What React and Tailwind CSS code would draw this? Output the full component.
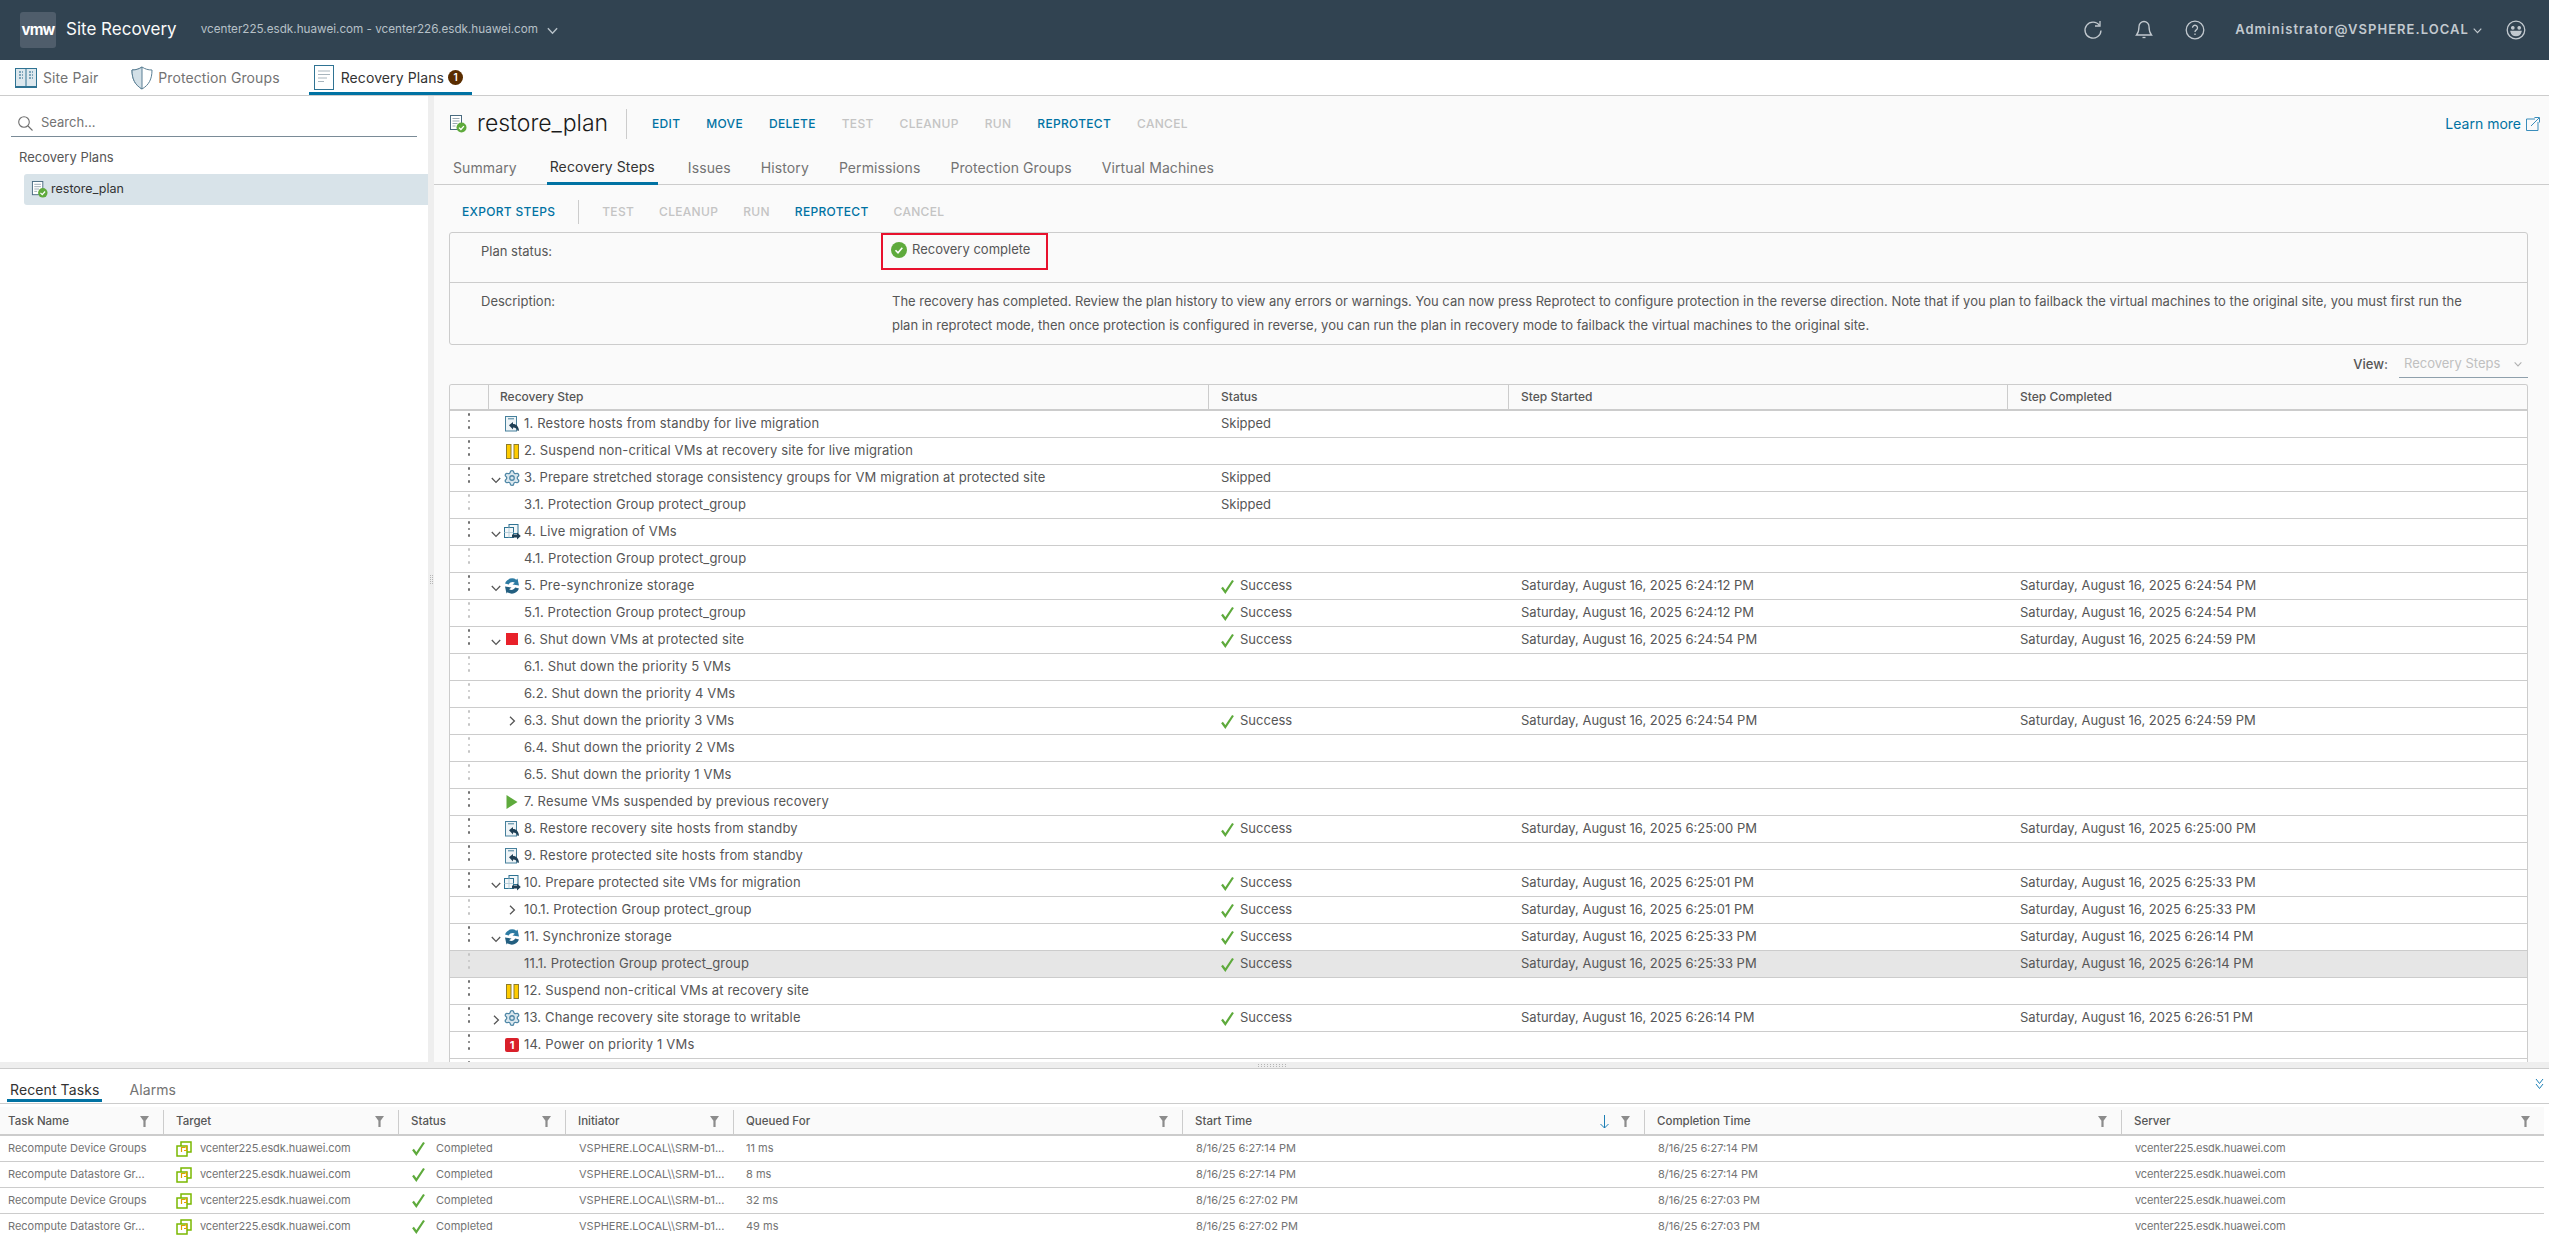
import React from "react";
import { Settings } from "lucide-react";

const Chev = ({ d = "down", c = "#565656", s = 10, className = "" }) => (
  <svg width={s} height={s} viewBox="0 0 10 10" fill="none" stroke={c} strokeWidth="1.3" className={`shrink-0 ${className}`}>
    {d === "down" ? <path d="M0.8 3l4.2 4.4L9.2 3" /> : <path d="M3 0.8l4.4 4.2L3 9.2" />}
  </svg>
);

const PlanIcon = ({ s = 18 }) => (
  <svg width={s} height={s} viewBox="0 0 18 18" className="shrink-0">
    <rect x="1.5" y="0.5" width="11" height="14" fill="#fff" stroke="#4a6b80" />
    <path d="M3.5 3.5h7M3.5 6h7M3.5 8.5h5M3.5 11h3" stroke="#9aa9b3" strokeWidth="1" />
    <circle cx="12.5" cy="12.5" r="5" fill="#5eaa3c" />
    <path d="M10 12.6l1.9 1.9 3-3.4" stroke="#fff" strokeWidth="1.3" fill="none" />
  </svg>
);

const HostIcon = () => (
  <svg width="15" height="16" viewBox="0 0 15 16" className="shrink-0">
    <rect x="0.5" y="0.5" width="11" height="14.5" fill="#eef4f7" stroke="#47809c" />
    <path d="M3 2.800h6" stroke="#47809c" />
    <path d="M4 9.300l4-3.300v2c3.500 0 5.500 2.500 6 6.500l-1.300.5c-.5-2-2-3.500-4.700-3.500v2z" fill="#1f3f55" />
  </svg>
);
const PauseIcon = () => (
  <svg width="13" height="15" viewBox="0 0 13 15" className="shrink-0">
    <rect x="0.500" y="0.500" width="4.500" height="14" fill="#ffcc00" stroke="#8f7d2b" />
    <rect x="8" y="0.500" width="4.500" height="14" fill="#ffcc00" stroke="#8f7d2b" />
  </svg>
);
const GearIcon = () => <Settings size={18} strokeWidth={1.7} color="#4f87a6" fill="#dbe8ef" className="shrink-0" />;
const MigrateIcon = () => (
  <svg width="17" height="16" viewBox="0 0 17 16" className="shrink-0">
    <rect x="5" y="0.500" width="9" height="9" fill="#f3f7f9" stroke="#2f7393" />
    <rect x="0.500" y="3.500" width="9" height="10" fill="#f3f7f9" stroke="#2f7393" />
    <path d="M5 3.500v10M0.500 8.500h9" stroke="#b7cfdb" strokeWidth="1" />
    <path d="M8 10.500h5V8.500l3.800 3.500L13 15.500v-2H8z" fill="#1f3f55" />
  </svg>
);
const SyncIcon = () => (
  <svg width="16" height="16" viewBox="0 0 16 16" className="shrink-0">
    <path d="M13.500 0.500L15 7.500 8.500 6.500 10.800 4.700C9 3.500 6 4 4.800 6.500L1 5.500C2.800 0.500 8.500-1 12.300 1.700z" fill="#2d7ba3" />
    <path d="M2.500 15.500L1 8.500 7.500 9.500 5.200 11.300C7 12.500 10 12 11.200 9.500L15 10.500C13.200 15.500 7.500 17 3.700 14.300z" fill="#235f80" />
  </svg>
);
const StopIcon = () => <div className="h-[12px] w-[12px] -translate-y-[1px] shrink-0 bg-[#e8212a]" />;
const PlayIcon = () => (
  <svg width="12" height="14" viewBox="0 0 12 14" className="shrink-0"><path d="M0.500 0L11.500 7 0.500 14z" fill="#5eaa3c" /></svg>
);
const PowerIcon = () => (
  <div className="flex h-[14px] w-[14px] shrink-0 items-center justify-center rounded-[2px] bg-[#d9202a] text-[11px] font-bold leading-none text-white">1</div>
);
const iconMap = { host: HostIcon, pause: PauseIcon, gear: GearIcon, migrate: MigrateIcon, sync: SyncIcon, stop: StopIcon, play: PlayIcon, power: PowerIcon };

const Check = ({ s = 13 }) => (
  <svg width={s} height={s + 2} viewBox="0 0 13 15" className="shrink-0">
    <path d="M1 8.500l3.300 4.500L12 1.500" stroke="#5eaa3c" strokeWidth="2.200" fill="none" />
  </svg>
);

const Filter = () => (
  <svg width="9" height="11" viewBox="0 0 9 11" className="shrink-0"><path d="M0 0h9L5.600 4.800V11H3.400V4.800z" fill="#8c8c8c" /></svg>
);

const steps = [
  { t: "1. Restore hosts from standby for live migration", i: "host", s: "Skipped" },
  { t: "2. Suspend non-critical VMs at recovery site for live migration", i: "pause" },
  { t: "3. Prepare stretched storage consistency groups for VM migration at protected site", i: "gear", e: "down", s: "Skipped" },
  { t: "3.1. Protection Group protect_group", sub: 1, s: "Skipped" },
  { t: "4. Live migration of VMs", i: "migrate", e: "down" },
  { t: "4.1. Protection Group protect_group", sub: 1 },
  { t: "5. Pre-synchronize storage", i: "sync", e: "down", s: "Success", a: "Saturday, August 16, 2025 6:24:12 PM", b: "Saturday, August 16, 2025 6:24:54 PM" },
  { t: "5.1. Protection Group protect_group", sub: 1, s: "Success", a: "Saturday, August 16, 2025 6:24:12 PM", b: "Saturday, August 16, 2025 6:24:54 PM" },
  { t: "6. Shut down VMs at protected site", i: "stop", e: "down", s: "Success", a: "Saturday, August 16, 2025 6:24:54 PM", b: "Saturday, August 16, 2025 6:24:59 PM" },
  { t: "6.1. Shut down the priority 5 VMs", sub: 1 },
  { t: "6.2. Shut down the priority 4 VMs", sub: 1 },
  { t: "6.3. Shut down the priority 3 VMs", sub: 1, r: 1, s: "Success", a: "Saturday, August 16, 2025 6:24:54 PM", b: "Saturday, August 16, 2025 6:24:59 PM" },
  { t: "6.4. Shut down the priority 2 VMs", sub: 1 },
  { t: "6.5. Shut down the priority 1 VMs", sub: 1 },
  { t: "7. Resume VMs suspended by previous recovery", i: "play" },
  { t: "8. Restore recovery site hosts from standby", i: "host", s: "Success", a: "Saturday, August 16, 2025 6:25:00 PM", b: "Saturday, August 16, 2025 6:25:00 PM" },
  { t: "9. Restore protected site hosts from standby", i: "host" },
  { t: "10. Prepare protected site VMs for migration", i: "migrate", e: "down", s: "Success", a: "Saturday, August 16, 2025 6:25:01 PM", b: "Saturday, August 16, 2025 6:25:33 PM" },
  { t: "10.1. Protection Group protect_group", sub: 1, r: 1, s: "Success", a: "Saturday, August 16, 2025 6:25:01 PM", b: "Saturday, August 16, 2025 6:25:33 PM" },
  { t: "11. Synchronize storage", i: "sync", e: "down", s: "Success", a: "Saturday, August 16, 2025 6:25:33 PM", b: "Saturday, August 16, 2025 6:26:14 PM" },
  { t: "11.1. Protection Group protect_group", sub: 1, sel: 1, s: "Success", a: "Saturday, August 16, 2025 6:25:33 PM", b: "Saturday, August 16, 2025 6:26:14 PM" },
  { t: "12. Suspend non-critical VMs at recovery site", i: "pause" },
  { t: "13. Change recovery site storage to writable", i: "gear", e: "right", s: "Success", a: "Saturday, August 16, 2025 6:26:14 PM", b: "Saturday, August 16, 2025 6:26:51 PM" },
  { t: "14. Power on priority 1 VMs", i: "power" },
  { t: "", i: null },
];

const tasks = [
  ["Recompute Device Groups", "11 ms", "8/16/25 6:27:14 PM", "8/16/25 6:27:14 PM"],
  ["Recompute Datastore Gr...", "8 ms", "8/16/25 6:27:14 PM", "8/16/25 6:27:14 PM"],
  ["Recompute Device Groups", "32 ms", "8/16/25 6:27:02 PM", "8/16/25 6:27:03 PM"],
  ["Recompute Datastore Gr...", "49 ms", "8/16/25 6:27:02 PM", "8/16/25 6:27:03 PM"],
];

const Dots = ({ light }) => (
  <div className="flex flex-col items-center gap-[4px] pt-[2px]">
    {[0, 1, 2].map((k) => (
      <div key={k} className={`h-[2.500px] w-[2.500px] rounded-full ${light ? "bg-[#c4c4c4]" : "bg-[#707070]"}`} />
    ))}
  </div>
);

const Row = ({ x }) => {
  const Ic = x.i ? iconMap[x.i] : null;
  return (
    <div className={`grid h-[27px] shrink-0 grid-cols-[38px_720px_300px_499px_1fr] border-b border-[#cccccc] text-[#565656] ${x.sel ? "bg-[#e6e6e6]" : "bg-white"}`}>
      <Dots light={x.sub} />
      <div className="flex items-center">
        <div className="flex w-[15px] shrink-0 justify-center pt-[3px]">{x.e ? <Chev d={x.e} /> : null}</div>
        <div className="flex w-[18px] shrink-0 justify-center">{Ic ? <Ic /> : x.r ? <Chev d="right" /> : null}</div>
        <span className="ml-[3px] whitespace-nowrap tracking-[0.15px]">{x.t}</span>
      </div>
      <div className="flex items-center gap-[6px] pl-[13px]">
        {x.s === "Success" ? <Check s={13} /> : null}
        {x.s}
      </div>
      <div className="flex items-center pl-[13px]">{x.a}</div>
      <div className="flex items-center pl-[13px]">{x.b}</div>
    </div>
  );
};

const Action = ({ children, off }) => (
  <span className={`text-[12px] font-medium tracking-[0.3px] whitespace-nowrap ${off ? "text-[#c4c4c4]" : "text-[#0072a3]"}`}>{children}</span>
);

const TH = ({ w, children, first, extra }) => (
  <div className={`flex h-full items-center ${first ? "pl-[8px]" : "pl-[12px]"} pr-[14px] ${w}`}>
    <span className="flex h-[20px] items-center">{children}</span>
    <span className="ml-auto flex items-center gap-[12px]">{extra}<Filter /></span>
  </div>
);

const Sep = () => <div className="h-[24px] w-px shrink-0 bg-[#cccccc]" />;

export default function App() {
  return (
    <div className="flex h-screen w-full flex-col overflow-hidden bg-white font-['Inter',sans-serif] text-[13px] text-[#565656]">
      {/* Header */}
      <header className="flex h-[60px] shrink-0 items-center bg-[#314351] pl-[20px]">
        <div className="flex h-[36px] w-[36px] items-center justify-center rounded-[3px] bg-[#4f5d6b] text-[15px] font-bold tracking-[-0.8px] text-white">vmw</div>
        <span className="ml-[10px] text-[17px] text-[#fafafa]">Site Recovery</span>
        <span className="ml-[24px] text-[11.700px] text-[#b6c0c7]">vcenter225.esdk.huawei.com - vcenter226.esdk.huawei.com</span>
        <span className="ml-[9px]"><Chev c="#b6c0c7" s={11} /></span>
        <div className="ml-auto flex items-center pr-[23px] text-[#c2c9cf]">
          <svg width="20" height="20" viewBox="0 0 20 20" fill="none" stroke="currentColor" strokeWidth="1.300">
            <path d="M16.500 5.500A8 8 0 1 0 18 10.500" /><path d="M17 1v5h-5" />
          </svg>
          <svg className="ml-[31px]" width="20" height="20" viewBox="0 0 20 20" fill="none" stroke="currentColor" strokeWidth="1.300">
            <path d="M10 1.500a5 5 0 0 0-5 5c0 4-.8 6.500-2.500 8.500h15c-1.700-2-2.500-4.500-2.500-8.500a5 5 0 0 0-5-5z" /><path d="M8.500 17.500h3" />
          </svg>
          <svg className="ml-[31px]" width="20" height="20" viewBox="0 0 20 20" fill="none" stroke="currentColor" strokeWidth="1.300">
            <circle cx="10" cy="10" r="8.800" /><path d="M7.500 7.800a2.500 2.500 0 1 1 3.800 2.100c-.9.600-1.300 1-1.300 2" /><path d="M10 13.500v1.500" />
          </svg>
          <span className="ml-[30px] text-[13px] font-semibold tracking-[1.050px] text-[#c2c9cf]">Administrator@VSPHERE.LOCAL</span>
          <span className="ml-[4px]"><Chev c="#c2c9cf" s={9} /></span>
          <svg className="ml-[24px]" width="20" height="20" viewBox="0 0 20 20" fill="none" stroke="currentColor" strokeWidth="1.300">
            <circle cx="10" cy="10" r="8.800" /><circle cx="6.800" cy="7.800" r="1.200" fill="currentColor" /><circle cx="13.200" cy="7.800" r="1.200" fill="currentColor" /><path d="M5 11.500h10c-.6 2.500-2.600 4-5 4s-4.400-1.500-5-4z" fill="currentColor" />
          </svg>
        </div>
      </header>

      {/* Nav */}
      <nav className="flex h-[36px] shrink-0 items-stretch border-b border-[#cccccc] bg-white text-[14px] tracking-[0.1px]">
        <div className="ml-[15px] flex items-center gap-[6px] text-[#737373]">
          <svg width="22" height="22" viewBox="0 0 22 22" fill="#dde8ee" stroke="#2f7393"><rect x="0.500" y="1.500" width="21" height="19" /><path d="M11 1.500v19M0 19.500h22" /><path d="M4 5h4M4 8h4M4 11h4M14 5h4M14 8h4M14 11h4" stroke="#7da5ba" strokeWidth="2" strokeDasharray="2 1" /></svg>
          <span>Site Pair</span>
        </div>
        <div className="ml-[33px] flex items-center gap-[5px] text-[#737373]">
          <svg width="22" height="24" viewBox="0 0 22 24" fill="#fff" stroke="#5b7f94"><path d="M11 1c3 2 6 3 10 3 0 9-3 15-10 19C4 19 1 13 1 4c4 0 7-1 10-3z" /><path d="M11 1c-3 2-6 3-10 3 0 9 3 15 10 19z" fill="#d3e0e7" /></svg>
          <span>Protection Groups</span>
        </div>
        <div className="ml-[29px] flex items-center border-b-[3px] border-[#0072a3] pl-[5px] pr-[9px] pt-[2px] text-[#333333]">
          <svg width="20" height="25" viewBox="0 0 20 25" fill="#fff" stroke="#2f7393"><rect x="0.500" y="0.500" width="19" height="24" /><path d="M4 6h12M4 9.500h12M4 13h9M4 16.500h6" stroke="#a8b5bd" /></svg>
          <span className="ml-[7px]">Recovery Plans</span>
          <span className="ml-[4px] flex h-[15px] w-[15px] items-center justify-center rounded-full bg-[#5a2d00] text-[10px] font-semibold leading-none text-white">1</span>
        </div>
      </nav>

      {/* Main */}
      <main className="flex min-h-0 flex-1">
        <aside className="w-[428px] shrink-0 bg-white">
          <div className="mx-[11px] mt-[12px] flex h-[29px] items-center gap-[8px] border-b border-[#7a8b97] pl-[7px] pt-[2px] text-[#737373]">
            <svg width="15" height="15" viewBox="0 0 15 15" fill="none" stroke="#6f6f6f" strokeWidth="1.100"><circle cx="6" cy="6" r="5.300" /><path d="M10 10l4.500 4.500" /></svg>
            <span>Search...</span>
          </div>
          <div className="ml-[19px] mt-[11px] text-[#565656]">Recovery Plans</div>
          <div className="ml-[24px] mt-[6px] flex h-[31px] items-center gap-[3px] rounded-l-[3px] bg-[#d8e3e9] pl-[7px] text-[12.500px] text-[#333333]">
            <PlanIcon s={17} />
            <span>restore_plan</span>
          </div>
        </aside>
        <div className="flex w-[6px] shrink-0 items-center justify-center bg-[#eeeeee]">
          <div className="grid grid-cols-2 gap-[1px]">
            {Array.from({ length: 10 }).map((_, k) => <div key={k} className="h-[1px] w-[1px] bg-[#b5b5b5]" />)}
          </div>
        </div>
        <section className="flex min-w-0 flex-1 flex-col overflow-hidden bg-[#fafafa]">
          <div className="flex h-[55px] shrink-0 items-center pl-[15px] pr-[9px]">
            <PlanIcon s={18} />
            <h1 className="ml-[10px] text-[23px] font-light text-[#1a1a1a]">restore_plan</h1>
            <div className="ml-[18px] h-[30px] w-px bg-[#cccccc]" />
            <div className="ml-[25px] flex items-center gap-[26px]">
              <Action>EDIT</Action><Action>MOVE</Action><Action>DELETE</Action>
              <Action off>TEST</Action><Action off>CLEANUP</Action><Action off>RUN</Action>
              <Action>REPROTECT</Action><Action off>CANCEL</Action>
            </div>
            <div className="ml-auto flex items-center gap-[5px] text-[14px] text-[#0072a3]">
              <span>Learn more</span>
              <svg width="14" height="14" viewBox="0 0 14 14" fill="none" stroke="#3a8dbb" strokeWidth="1"><path d="M9 2H.500v11.500H12V5" /><path d="M5 9l8-8M8.500.500h5v5" /></svg>
            </div>
          </div>

          <div className="flex h-[34px] shrink-0 items-stretch gap-[30px] border-b border-[#cccccc] pl-[19px] text-[14px] tracking-[0.1px] text-[#737373]">
            <div className="flex items-center">Summary</div>
            <div className="-mb-px flex items-center border-b-[3px] border-[#0072a3] px-[3px] text-[#333333]">Recovery Steps</div>
            <div className="flex items-center">Issues</div>
            <div className="flex items-center">History</div>
            <div className="flex items-center">Permissions</div>
            <div className="flex items-center">Protection Groups</div>
            <div className="flex items-center">Virtual Machines</div>
          </div>

          <div className="flex h-[47px] shrink-0 items-center pl-[28px] pt-[7px]">
            <Action>EXPORT STEPS</Action>
            <div className="ml-[23px] h-[24px] w-px bg-[#cccccc]" />
            <div className="ml-[23px] flex items-center gap-[25px]">
              <Action off>TEST</Action><Action off>CLEANUP</Action><Action off>RUN</Action>
              <Action>REPROTECT</Action><Action off>CANCEL</Action>
            </div>
          </div>

          <div className="mr-[21px] ml-[15px] h-[113px] shrink-0 rounded-[3px] border border-[#cccccc]">
            <div className="flex h-[50px] items-start border-b border-[#cccccc]">
              <span className="ml-[31px] mt-[9px] w-[400px]">Plan status:</span>
              <div className="flex h-[37px] w-[167px] items-center gap-[5px] border-2 border-[#e8112d] pl-[8px] pb-[3px]">
                <svg width="16" height="16" viewBox="0 0 16 16"><circle cx="8" cy="8" r="8" fill="#5eaa3c" /><path d="M4.500 8.300l2.500 2.500 4.300-5" stroke="#fff" strokeWidth="1.600" fill="none" /></svg>
                <span>Recovery complete</span>
              </div>
            </div>
            <div className="flex pt-[6px]">
              <span className="ml-[31px] w-[411px] shrink-0 leading-[24px]">Description:</span>
              <p className="w-[1590px] leading-[24px]">The recovery has completed. Review the plan history to view any errors or warnings. You can now press Reprotect to configure protection in the reverse direction. Note that if you plan to failback the virtual machines to the original site, you must first run the plan in reprotect mode, then once protection is configured in reverse, you can run the plan in recovery mode to failback the virtual machines to the original site.</p>
            </div>
          </div>

          <div className="flex h-[39px] shrink-0 items-center justify-end pr-[21px]">
            <span className="font-medium">View:</span>
            <div className="ml-[11px] flex h-[26px] w-[129px] items-center justify-between border-b border-[#8fa0ac] pl-[5px] pr-[6px] text-[#c0c0c0]">
              <span>Recovery Steps</span><Chev c="#b0b0b0" s={8} />
            </div>
          </div>

          <div className="mr-[21px] ml-[15px] flex min-h-0 flex-1 flex-col overflow-hidden rounded-t-[3px] border-x border-t border-[#cccccc] bg-white">
            <div className="grid h-[26px] shrink-0 grid-cols-[38px_720px_300px_499px_1fr] items-center border-b-2 border-[#cccccc] bg-[#fafafa] text-[12px] font-medium">
              <div />
              <div className="flex items-center gap-[11px]"><Sep /><span>Recovery Step</span></div>
              <div className="flex items-center gap-[12px]"><Sep /><span>Status</span></div>
              <div className="flex items-center gap-[12px]"><Sep /><span>Step Started</span></div>
              <div className="flex items-center gap-[12px]"><Sep /><span>Step Completed</span></div>
            </div>
            {steps.map((x, k) => <Row key={k} x={x} />)}
          </div>
        </section>
      </main>

      {/* H splitter */}
      <div className="flex h-[7px] shrink-0 items-center justify-center border-b border-[#cccccc] bg-[#eeeeee] pr-[5px]">
        <div className="grid grid-cols-[repeat(10,2px)] gap-x-[1px] gap-y-[1px]">
          {Array.from({ length: 20 }).map((_, k) => <div key={k} className="h-[1px] w-[1px] bg-[#b5b5b5]" />)}
        </div>
      </div>

      {/* Bottom */}
      <div className="flex h-[169px] shrink-0 flex-col overflow-hidden bg-white">
        <div className="flex h-[35px] shrink-0 items-stretch border-b border-[#cccccc] pl-[7px] text-[14px] tracking-[0.1px]">
          <div className="flex h-[33px] items-center border-b-[3px] border-[#0072a3] px-[3px] pt-[10px] text-[#333333]">Recent Tasks</div>
          <div className="ml-[27px] flex h-[33px] items-center pt-[7px] text-[#737373]">Alarms</div>
          <div className="ml-auto mr-[5px] mt-[9px]">
            <svg width="9" height="12" viewBox="0 0 9 12" fill="none" stroke="#1c7fb5" strokeWidth="1"><path d="M1 1l3.500 4.500L8 1M1 6l3.500 4.500L8 6" /></svg>
          </div>
        </div>
        <div className="mr-[5px] mt-[3px] flex h-[29px] shrink-0 items-center border-b-2 border-[#cccccc] bg-[#fafafa] pt-[2px] text-[11.500px] font-medium">
          <TH first w="w-[163px]">Task Name</TH><Sep />
          <TH w="w-[234px]">Target</TH><Sep />
          <TH w="w-[166px]">Status</TH><Sep />
          <TH w="w-[167px]">Initiator</TH><Sep />
          <TH w="w-[448px]">Queued For</TH><Sep />
          <TH w="w-[461px]" extra={<svg width="9" height="14" viewBox="0 0 9 14" fill="none" stroke="#1c7fb5"><path d="M4.500 0v13M.500 9l4 4 4-4" /></svg>}>Start Time</TH><Sep />
          <TH w="w-[476px]">Completion Time</TH><Sep />
          <TH w="flex-1">Server</TH>
        </div>
        {tasks.map((t, k) => (
          <div key={k} className="mr-[5px] flex h-[26px] shrink-0 items-center border-b border-[#cccccc] text-[11px] text-[#737373]">
            <div className="w-[164px] shrink-0 pl-[8px] whitespace-nowrap">{t[0]}</div>
            <div className="flex w-[235px] shrink-0 items-center gap-[8px] pl-[12px]">
              <svg width="16" height="16" viewBox="0 0 16 16" fill="none"><rect x="5" y="1" width="10" height="10" fill="#fff" stroke="#7ab800" strokeWidth="1.500" /><rect x="1" y="5" width="10" height="10" fill="#fff" stroke="#7ab800" strokeWidth="1.500" /><path d="M5.500 11V6.500h4M10.500 4.500v5H8" stroke="#e0a100" strokeWidth="1.200" /></svg>
              <span className="tracking-[-0.1px]">vcenter225.esdk.huawei.com</span>
            </div>
            <div className="flex w-[167px] shrink-0 items-center gap-[11px] pl-[13px]"><Check s={13} /><span>Completed</span></div>
            <div className="w-[168px] shrink-0 pl-[13px] whitespace-nowrap">VSPHERE.LOCAL\\SRM-b1...</div>
            <div className="w-[449px] shrink-0 pl-[12px]">{t[1]}</div>
            <div className="w-[462px] shrink-0 pl-[13px]">{t[2]}</div>
            <div className="w-[477px] shrink-0 pl-[13px]">{t[3]}</div>
            <div className="flex-1 pl-[13px] tracking-[-0.1px]">vcenter225.esdk.huawei.com</div>
          </div>
        ))}
      </div>
    </div>
  );
}
